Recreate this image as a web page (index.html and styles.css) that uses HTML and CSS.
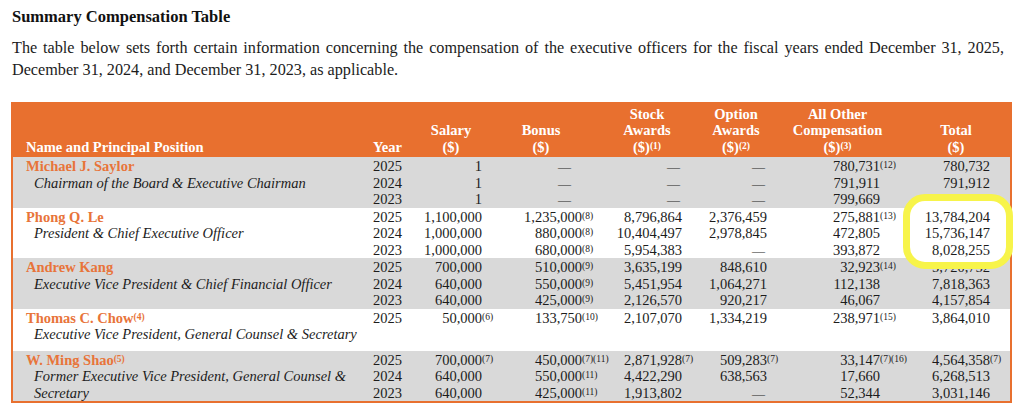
FILE: index.html
```html
<!DOCTYPE html>
<html lang="en">
<head>
  <meta charset="UTF-8">
  <title>Summary Compensation Table</title>
  <link rel="stylesheet" href="styles.css">
</head>
<body>
  <div class="page">
    <h2 class="title">Summary Compensation Table</h2>
    <p class="intro">The table below sets forth certain information concerning the compensation of the executive officers for the fiscal years ended December 31, 2025, December 31, 2024, and December 31, 2023, as applicable.</p>

    <div class="table-wrap">
      <table class="comp-table">
        <colgroup>
          <col class="c-name">
          <col class="c-year">
          <col class="c-salary">
          <col class="c-bonus">
          <col class="c-stock">
          <col class="c-option">
          <col class="c-other">
          <col class="c-total">
        </colgroup>
        <thead>
          <tr>
            <th class="h-name">Name and Principal Position</th>
            <th class="h-year">Year</th>
            <th class="h-salary">Salary<br>($)</th>
            <th class="h-bonus">Bonus<br>($)</th>
            <th class="h-stock">Stock<br>Awards<br>($)<sup>(1)</sup></th>
            <th class="h-option">Option<br>Awards<br>($)<sup>(2)</sup></th>
            <th class="h-other">All Other<br>Compensation<br>($)<sup>(3)</sup></th>
            <th class="h-total">Total<br>($)</th>
          </tr>
        </thead>
        <tbody>
          <tr class="shade">
            <td class="name"><div class="who">Michael J. Saylor</div><div class="role">Chairman of the Board &amp; Executive Chairman</div></td>
            <td class="year">2025<br>2024<br>2023</td>
            <td class="num">1<br>1<br>1</td>
            <td class="num bonus"><span class="dash">—</span><br><span class="dash">—</span><br><span class="dash">—</span></td>
            <td class="num stock"><span class="dash">—</span><br><span class="dash">—</span><br><span class="dash">—</span></td>
            <td class="num option"><span class="dash">—</span><br><span class="dash">—</span><br><span class="dash">—</span></td>
            <td class="num other">780,731<sup>(12)</sup><br>791,911<br>799,669</td>
            <td class="num total">780,732<br>791,912<br>799,669</td>
          </tr>
          <tr>
            <td class="name"><div class="who">Phong Q. Le</div><div class="role">President &amp; Chief Executive Officer</div></td>
            <td class="year">2025<br>2024<br>2023</td>
            <td class="num">1,100,000<br>1,000,000<br>1,000,000</td>
            <td class="num bonus">1,235,000<sup>(8)</sup><br>880,000<sup>(8)</sup><br>680,000<sup>(8)</sup></td>
            <td class="num stock">8,796,864<br>10,404,497<br>5,954,383</td>
            <td class="num option">2,376,459<br>2,978,845<br><span class="dash">—</span></td>
            <td class="num other">275,881<sup>(13)</sup><br>472,805<br>393,872</td>
            <td class="num total"><span class="raised">13,784,204<br>15,736,147<br>8,028,255</span></td>
          </tr>
          <tr class="shade">
            <td class="name"><div class="who">Andrew Kang</div><div class="role">Executive Vice President &amp; Chief Financial Officer</div></td>
            <td class="year">2025<br>2024<br>2023</td>
            <td class="num">700,000<br>640,000<br>640,000</td>
            <td class="num bonus">510,000<sup>(9)</sup><br>550,000<sup>(9)</sup><br>425,000<sup>(9)</sup></td>
            <td class="num stock">3,635,199<br>5,451,954<br>2,126,570</td>
            <td class="num option">848,610<br>1,064,271<br>920,217</td>
            <td class="num other">32,923<sup>(14)</sup><br>112,138<br>46,067</td>
            <td class="num total">5,720,752<br>7,818,363<br>4,157,854</td>
          </tr>
          <tr class="short">
            <td class="name"><div class="who">Thomas C. Chow<sup>(4)</sup></div><div class="role">Executive Vice President, General Counsel &amp; Secretary</div></td>
            <td class="year">2025</td>
            <td class="num">50,000<sup>(6)</sup></td>
            <td class="num bonus">133,750<sup>(10)</sup></td>
            <td class="num stock">2,107,070</td>
            <td class="num option">1,334,219</td>
            <td class="num other">238,971<sup>(15)</sup></td>
            <td class="num total">3,864,010</td>
          </tr>
          <tr class="shade">
            <td class="name"><div class="who">W. Ming Shao<sup>(5)</sup></div><div class="role">Former Executive Vice President, General Counsel &amp;<br>Secretary</div></td>
            <td class="year">2025<br>2024<br>2023</td>
            <td class="num">700,000<sup>(7)</sup><br>640,000<br>640,000</td>
            <td class="num bonus">450,000<sup>(7)(11)</sup><br>550,000<sup>(11)</sup><br>425,000<sup>(11)</sup></td>
            <td class="num stock">2,871,928<sup>(7)</sup><br>4,422,290<br>1,913,802</td>
            <td class="num option">509,283<sup>(7)</sup><br>638,563<br><span class="dash">—</span></td>
            <td class="num other">33,147<sup>(7)(16)</sup><br>17,660<br>52,344</td>
            <td class="num total">4,564,358<sup>(7)</sup><br>6,268,513<br>3,031,146</td>
          </tr>
        </tbody>
      </table>
      <div class="highlight"></div>
    </div>
  </div>
</body>
</html>
```

FILE: styles.css
```css
* {
  margin: 0;
  padding: 0;
  box-sizing: border-box;
}

body {
  font-family: "Liberation Serif", "Times New Roman", serif;
  background-color: #ffffff;
  color: #1c1c1c;
}

.page {
  padding: 7px 0 0 11px;
  width: 1012px;
}

.title {
  font-size: 16.5px;
  line-height: 20px;
  font-weight: bold;
  padding-left: 1px;
  color: #111111;
}

.intro {
  font-size: 16.2px;
  line-height: 22px;
  margin-top: 10px;
  padding-left: 1px;
  width: 993px;
  text-align: justify;
}

.table-wrap {
  position: relative;
  margin-top: 21px;
  width: 1001px;
}

.comp-table {
  width: 1001px;
  table-layout: fixed;
  border-collapse: separate;
  border-spacing: 0;
  border: 2px solid #e8702f;
  border-top: 0;
  font-size: 14.5px;
}

.c-name { width: 352px; }
.c-year { width: 45px; }
.c-salary { width: 85px; }
.c-bonus { width: 100px; }
.c-stock { width: 100px; }
.c-option { width: 85px; }
.c-other { width: 115px; }
.c-total { width: 115px; }

/* header */
.comp-table thead th {
  background-color: #e8702f;
  color: #ffffff;
  font-weight: bold;
  line-height: 16.5px;
  height: 55px;
  vertical-align: bottom;
  text-align: center;
  padding-bottom: 2px;
}

.comp-table th.h-name {
  text-align: left;
  padding-left: 13px;
}

.comp-table th.h-year {
  text-align: left;
  padding-left: 8px;
}

.h-salary { padding-right: 3px; }
.h-bonus { padding-right: 8px; }
.h-stock { padding-left: 4px; }
.h-option { padding-right: 3px; }
.h-total { padding-left: 7px; }

/* body */
.comp-table td {
  line-height: 16.5px;
  vertical-align: top;
  padding-top: 1px;
  height: 50px;
  white-space: nowrap;
}

.comp-table td > * {
  line-height: 16.5px;
}

.comp-table tr.shade td {
  background-color: #d9d9d9;
}

.comp-table tr.short td {
  height: 42px;
}

.name {
  padding-left: 13px;
}

.who {
  color: #e8743a;
  font-weight: bold;
}

.role {
  font-style: italic;
  padding-left: 8px;
}

.year {
  padding-left: 8px;
}

.num {
  text-align: right;
  padding-right: 13px;
}

.num.other {
  padding-right: 15px;
}

.num.total {
  padding-right: 20px;
}

sup {
  font-size: 9.5px;
  line-height: 0;
  vertical-align: 3px;
}

/* footnote marks hang past the column edge */
.comp-table .num sup {
  display: inline-block;
  width: 0;
  line-height: 1;
  vertical-align: 3px;
  text-align: left;
  white-space: nowrap;
}

.comp-table .dash {
  display: inline-block;
  font-size: 13px;
  line-height: 1;
}

.bonus .dash { margin-right: 11px; }
.stock .dash { margin-right: 2px; }
.option .dash { margin-right: 2px; }

/* yellow annotation drawn over the totals */
.highlight {
  position: absolute;
  left: 892px;
  top: 92px;
  width: 110px;
  height: 75px;
  border: 7px solid #f7f44a;
  border-radius: 22px;
  background-color: #ffffff;
  z-index: 1;
}

.raised {
  position: relative;
  z-index: 2;
}
```
